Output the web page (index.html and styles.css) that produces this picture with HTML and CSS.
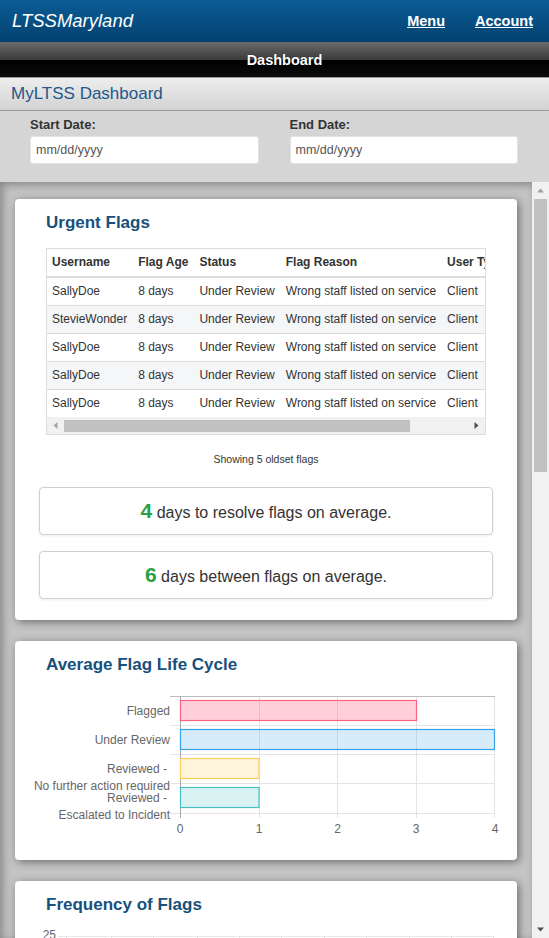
FILE: index.html
```html
<!DOCTYPE html>
<html lang="en">
<head>
<meta charset="utf-8">
<title>MyLTSS Dashboard</title>
<link rel="stylesheet" href="styles.css">
</head>
<body>
<header class="topbar">
  <a class="brand" href="#">LTSSMaryland</a>
  <nav class="nav">
    <a href="#">Menu</a>
    <a href="#">Account</a>
  </nav>
</header>
<div class="pagebar">Dashboard</div>
<div class="subbar">MyLTSS Dashboard</div>
<form class="filters">
  <label class="field"><span class="field-label">Start Date:</span><input class="field-input" type="text" placeholder="mm/dd/yyyy"></label>
  <label class="field"><span class="field-label">End Date:</span><input class="field-input" type="text" placeholder="mm/dd/yyyy"></label>
</form>
<div class="scroll-area">
  <main class="scroll">
    <section class="card">
      <h2 class="card-title">Urgent Flags</h2>
      <div class="table-wrap">
        <div class="table-clip">
          <table class="flags">
            <thead>
              <tr><th>Username</th><th>Flag Age</th><th>Status</th><th>Flag Reason</th><th class="last">User Type</th></tr>
            </thead>
            <tbody>
              <tr><td>SallyDoe</td><td>8 days</td><td>Under Review</td><td>Wrong staff listed on service</td><td class="last">Client</td></tr>
              <tr><td>StevieWonder</td><td>8 days</td><td>Under Review</td><td>Wrong staff listed on service</td><td class="last">Client</td></tr>
              <tr><td>SallyDoe</td><td>8 days</td><td>Under Review</td><td>Wrong staff listed on service</td><td class="last">Client</td></tr>
              <tr><td>SallyDoe</td><td>8 days</td><td>Under Review</td><td>Wrong staff listed on service</td><td class="last">Client</td></tr>
              <tr><td>SallyDoe</td><td>8 days</td><td>Under Review</td><td>Wrong staff listed on service</td><td class="last">Client</td></tr>
            </tbody>
          </table>
        </div>
        <div class="hscroll">
          <span class="sb-btn"><svg width="17" height="17" viewBox="0 0 17 17"><path d="M10.5 5v7l-4-3.5z" fill="#a3a3a3"/></svg></span>
          <span class="hthumb"></span>
          <span class="sb-fill"></span>
          <span class="sb-btn"><svg width="17" height="17" viewBox="0 0 17 17"><path d="M6.5 5v7l4-3.5z" fill="#505050"/></svg></span>
        </div>
      </div>
      <p class="caption">Showing 5 oldset flags</p>
      <div class="stat"><span class="stat-num">4</span> days to resolve flags on average.</div>
      <div class="stat"><span class="stat-num">6</span> days between flags on average.</div>
    </section>

    <section class="card">
      <h2 class="card-title">Average Flag Life Cycle</h2>
      <svg class="chart" width="502" height="164" viewBox="0 0 502 164">
        <g stroke="#e4e4e4" stroke-width="1">
          <line x1="155" y1="50.5" x2="480" y2="50.5"/>
          <line x1="155" y1="79.5" x2="480" y2="79.5"/>
          <line x1="155" y1="108.5" x2="480" y2="108.5"/>
          <line x1="155" y1="138.5" x2="480" y2="138.5"/>
          <line x1="244.5" y1="21" x2="244.5" y2="143"/>
          <line x1="322.5" y1="21" x2="322.5" y2="143"/>
          <line x1="401.5" y1="21" x2="401.5" y2="143"/>
          <line x1="479.5" y1="21" x2="479.5" y2="143"/>
        </g>
        <line x1="155" y1="21.5" x2="480" y2="21.5" stroke="#bcbcbc"/>
        <line x1="165.5" y1="21" x2="165.5" y2="143" stroke="#a8a8a8"/>
        <rect x="165.5" y="25.5" width="236" height="20" fill="rgba(255,99,132,0.3)" stroke="#ff6384" stroke-width="1.2"/>
        <rect x="165.5" y="54.5" width="314" height="20" fill="rgba(54,162,235,0.2)" stroke="#36a2eb" stroke-width="1.2"/>
        <rect x="165.5" y="83.5" width="78.5" height="20" fill="rgba(255,206,86,0.2)" stroke="#ffce56" stroke-width="1.2"/>
        <rect x="165.5" y="112.5" width="78.5" height="20" fill="rgba(75,192,192,0.2)" stroke="#4bc0c0" stroke-width="1.2"/>
        <g class="axis-text" text-anchor="end">
          <text x="155" y="40">Flagged</text>
          <text x="155" y="69">Under Review</text>
          <text x="152" y="98">Reviewed -</text>
          <text x="155" y="115">No further action required</text>
          <text x="152" y="127">Reviewed -</text>
          <text x="155" y="144">Escalated to Incident</text>
        </g>
        <g class="axis-text" text-anchor="middle">
          <text x="165" y="158">0</text>
          <text x="244" y="158">1</text>
          <text x="322.5" y="158">2</text>
          <text x="401" y="158">3</text>
          <text x="480" y="158">4</text>
        </g>
      </svg>
    </section>

    <section class="card">
      <h2 class="card-title">Frequency of Flags</h2>
      <svg class="chart" width="502" height="260" viewBox="0 0 502 260">
        <g stroke="#e6e6e6" stroke-width="1">
          <line x1="43" y1="21.5" x2="478" y2="21.5"/>
          <line x1="43" y1="61.5" x2="478" y2="61.5"/>
          <line x1="43" y1="101.5" x2="478" y2="101.5"/>
          <line x1="43" y1="141.5" x2="478" y2="141.5"/>
          <line x1="43" y1="181.5" x2="478" y2="181.5"/>
          <line x1="43" y1="221.5" x2="478" y2="221.5"/>
          <line x1="51.5" y1="21" x2="51.5" y2="226"/>
          <line x1="96.5" y1="21" x2="96.5" y2="226"/>
          <line x1="138.5" y1="21" x2="138.5" y2="226"/>
          <line x1="182.5" y1="21" x2="182.5" y2="226"/>
          <line x1="224.5" y1="21" x2="224.5" y2="226"/>
          <line x1="266.5" y1="21" x2="266.5" y2="226"/>
          <line x1="309.5" y1="21" x2="309.5" y2="226"/>
          <line x1="351.5" y1="21" x2="351.5" y2="226"/>
          <line x1="394.5" y1="21" x2="394.5" y2="226"/>
          <line x1="436.5" y1="21" x2="436.5" y2="226"/>
          <line x1="478.5" y1="21" x2="478.5" y2="226"/>
        </g>
        <g class="axis-text" text-anchor="end">
          <text x="41" y="24">25</text>
          <text x="41" y="65">20</text>
          <text x="41" y="105">15</text>
          <text x="41" y="145">10</text>
          <text x="41" y="185">5</text>
          <text x="41" y="225">0</text>
        </g>
        <polyline points="51,189 96,173 138,165 182,181 224,149 266,157 309,141 351,165 394,133 436,149 478,125" fill="none" stroke="#36a2eb" stroke-width="2"/>
      </svg>
    </section>
  </main>
  <div class="vscroll">
    <span class="sb-btn"><svg width="17" height="17" viewBox="0 0 17 17"><path d="M5 10.5h7l-3.5-4z" fill="#a3a3a3"/></svg></span>
    <span class="vthumb"></span>
    <span class="sb-fill"></span>
    <span class="sb-btn"><svg width="17" height="17" viewBox="0 0 17 17"><path d="M5 6.5h7l-3.5 4z" fill="#505050"/></svg></span>
  </div>
</div>
</body>
</html>
```
FILE: styles.css
```css
html, body {
  margin: 0;
  padding: 0;
}

body {
  height: 938px;
  display: flex;
  flex-direction: column;
  overflow: hidden;
  font-family: "Liberation Sans", Arial, sans-serif;
  color: #333;
}

/* Top brand bar */
.topbar {
  height: 42px;
  flex: none;
  box-sizing: border-box;
  display: flex;
  align-items: center;
  justify-content: space-between;
  padding: 0 16px 0 12px;
  background: linear-gradient(#0b5c96, #03416f);
}

.brand {
  color: #fff;
  font-style: italic;
  font-size: 18.5px;
  text-decoration: none;
}

.nav {
  display: flex;
  gap: 30px;
}

.nav a {
  color: #fff;
  font-weight: bold;
  font-size: 14.5px;
  text-decoration: underline;
}

/* Black page bar */
.pagebar {
  height: 35px;
  flex: none;
  border-bottom: 1px solid #9a9a9a;
  background: linear-gradient(#6a6a6a 0%, #3c3c3c 50%, #000 50%, #0c0c0c 100%);
  color: #fff;
  font-weight: bold;
  font-size: 14.5px;
  display: flex;
  align-items: center;
  justify-content: center;
  padding-left: 20px;
  text-shadow: 0 0 1px #000;
}

/* Sub bar */
.subbar {
  height: 32px;
  flex: none;
  border-bottom: 1px solid #9a9a9a;
  background: linear-gradient(#eeeeee, #d2d2d2);
  color: #22588c;
  font-size: 17px;
  line-height: 32px;
  padding-left: 11px;
}

/* Filters */
.filters {
  flex: none;
  margin: 0;
  background: #d5d5d5;
  padding: 6px 31px 18px 30px;
  display: grid;
  grid-template-columns: 1fr 1fr;
  column-gap: 31px;
}

.field {
  display: block;
}

.field-label {
  display: block;
  font-weight: bold;
  font-size: 13px;
  line-height: 16px;
  color: #333;
}

.field-input {
  display: block;
  width: 100%;
  height: 28px;
  box-sizing: border-box;
  margin-top: 3px;
  border: 1px solid #e2e2e2;
  border-radius: 3px;
  background: #fff;
  padding: 0 5px;
  font-family: "Liberation Sans", Arial, sans-serif;
  font-size: 12.5px;
}

.field-input::placeholder {
  color: #555;
}

/* Scrolling content area */
.scroll-area {
  flex: 1;
  min-height: 0;
  display: flex;
}

.scroll {
  flex: 1;
  min-width: 0;
  overflow: hidden;
  background: #c4c4c4;
  box-shadow: inset 3px 3px 9px rgba(0, 0, 0, 0.3);
  padding: 17px 15px;
  display: flex;
  flex-direction: column;
  gap: 21px;
}

.card {
  flex: none;
  background: #fff;
  border-radius: 4px;
  box-shadow: 2px 2px 8px rgba(0, 0, 0, 0.45);
  padding: 14px 24px 21px;
}

.card-title {
  margin: 0 7px;
  font-size: 17px;
  line-height: 20px;
  font-weight: bold;
  color: #18507c;
}

/* Fake scrollbars */
.vscroll {
  width: 17px;
  flex: none;
  background: #f1f1f1;
  display: flex;
  flex-direction: column;
}

.sb-btn {
  display: block;
  width: 17px;
  height: 17px;
  flex: none;
}

.sb-btn svg {
  display: block;
}

.sb-fill {
  flex: 1;
}

.vthumb {
  flex: none;
  height: 273px;
  margin: 0 2px;
  background: #c1c1c1;
}

/* Table */
.table-wrap {
  margin: 15px 7px 0;
  border: 1px solid #dcdcdc;
}

.table-clip {
  overflow: hidden;
}

.hscroll {
  height: 17px;
  display: flex;
  background: #f1f1f1;
}

.hthumb {
  flex: none;
  width: 346px;
  margin: 3px 0 2px;
  background: #c1c1c1;
}

.flags {
  border-spacing: 0;
  white-space: nowrap;
  font-size: 12px;
  color: #333;
}

.flags th {
  text-align: left;
  font-weight: bold;
  line-height: 27px;
  padding: 0 6px 0 5px;
  border-bottom: 2px solid #dcdcdc;
}

.flags td {
  line-height: 27px;
  padding: 0 6px 0 5px;
  border-bottom: 1px solid #dcdcdc;
}

.flags tbody tr:nth-child(even) td {
  background: #f4f6f8;
}

.flags tbody tr:last-child td {
  border-bottom: none;
}

.flags .last {
  min-width: 104px;
}

.caption {
  margin: 17px 0 21px;
  text-align: center;
  font-size: 10.5px;
  line-height: 14px;
  color: #333;
}

.stat {
  height: 46px;
  border: 1px solid #d0d0d0;
  border-radius: 4px;
  box-shadow: 0 1px 3px rgba(0, 0, 0, 0.08);
  text-align: center;
  line-height: 46px;
  font-size: 16px;
  color: #333;
}

.stat + .stat {
  margin-top: 16px;
}

.stat-num {
  color: #28a046;
  font-weight: bold;
  font-size: 21px;
}

/* Charts */
.chart {
  display: block;
  margin: 0 -24px;
}

.axis-text {
  font-family: "Liberation Sans", Arial, sans-serif;
  font-size: 12px;
  fill: #666;
}
```
